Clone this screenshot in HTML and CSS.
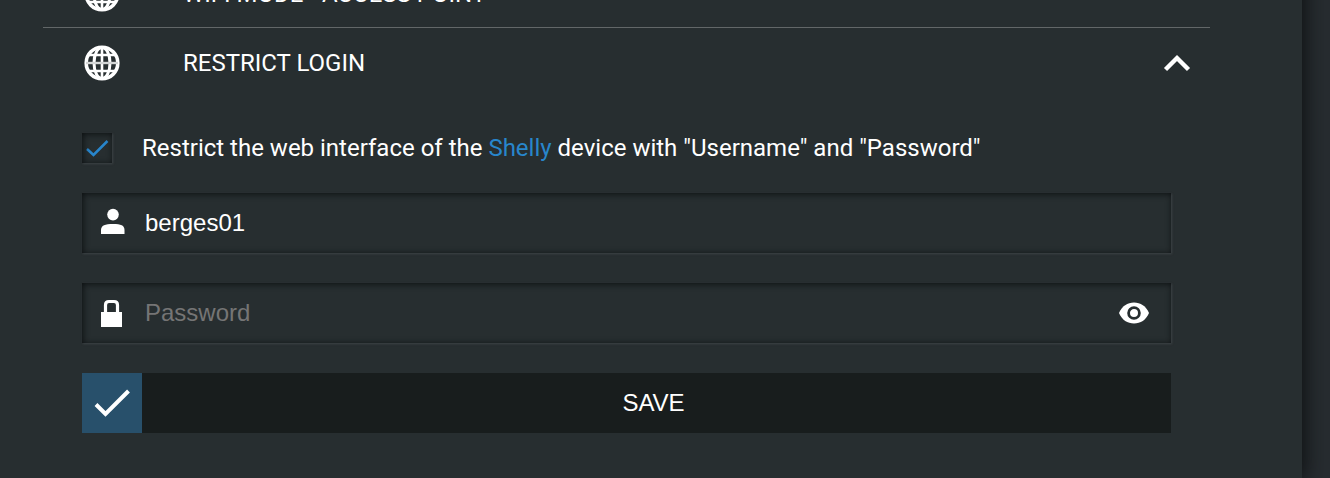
FILE: index.html
```html
<!DOCTYPE html>
<html lang="en">
<head>
<meta charset="utf-8">
<meta name="viewport" content="width=device-width, initial-scale=1">
<title>Restrict login</title>
<link rel="stylesheet" href="styles.css">
</head>
<body>
<svg class="sprite" aria-hidden="true">
  <symbol id="globe" viewBox="0 0 36 36">
    <g fill="none" stroke="#fff">
      <circle cx="18" cy="18" r="15.8" stroke-width="3.6"/>
      <ellipse cx="18" cy="18" rx="8" ry="15.5" stroke-width="3"/>
      <path d="M18 2V34" stroke-width="2.6"/>
      <path d="M2 18H34" stroke-width="2.4" stroke="#d4d6d6"/>
      <path d="M5 10H31M5 26H31" stroke-width="2.6"/>
    </g>
  </symbol>
</svg>
<main class="panel">
  <button class="row" type="button">
    <svg class="globe" aria-hidden="true"><use href="#globe"/></svg>
    <span class="title">WIFI MODE - ACCESS POINT</span>
  </button>
  <section>
    <button class="row row-open" type="button" aria-expanded="true">
      <svg class="globe" aria-hidden="true"><use href="#globe"/></svg>
      <span class="title">RESTRICT LOGIN</span>
      <svg class="chevron" viewBox="0 0 28 18" aria-hidden="true"><path d="M2.500 15.500 14 4 25.500 15.500" fill="none" stroke="#fff" stroke-width="4.400"/></svg>
    </button>
    <form class="form">
      <div class="option">
        <input class="check" id="restrict" type="checkbox" checked>
        <label for="restrict">Restrict the web interface of the <a class="link" href="#">Shelly</a> device with "Username" and "Password"</label>
      </div>
      <div class="field">
        <svg class="icon" viewBox="0 0 26 30" aria-hidden="true"><circle cx="13" cy="6.6" r="5.8" fill="#fff"/><path d="M1 26V22C1 17.500 5 16 13 16S24.500 17.500 24.500 22V26Z" fill="#fff"/></svg>
        <input class="input" type="text" value="berges01" aria-label="Username">
      </div>
      <div class="field">
        <svg class="icon" viewBox="0 0 26 30" aria-hidden="true"><path d="M1 14H22V29H1Z" fill="#fff"/><path d="M5.500 15V7Q5.500 3.500 9 3.500H14Q17.500 3.500 17.500 7V15" fill="none" stroke="#fff" stroke-width="3.200"/></svg>
        <input class="input" type="password" placeholder="Password" aria-label="Password">
        <button class="reveal" type="button" aria-label="Show password">
          <svg class="eye" viewBox="0 0 30 22" aria-hidden="true"><path d="M0 11C3 4 8.500 .5 15 .5S27 4 30 11C27 18 21.500 21.500 15 21.500S3 18 0 11Z" fill="#fff"/><circle cx="15" cy="11" r="5.400" fill="#fff" stroke="#272e30" stroke-width="2.800"/></svg>
        </button>
      </div>
      <button class="save" type="button">
        <span class="save-icon"><svg class="save-check" viewBox="0 0 36 28" aria-hidden="true"><path d="M2 15.500 11.500 25 34.500 2" fill="none" stroke="#fff" stroke-width="4"/></svg></span>
        <span class="save-text">SAVE</span>
      </button>
    </form>
  </section>
</main>
</body>
</html>
```
FILE: styles.css
```css
* { box-sizing: border-box; }

body {
  margin: 0;
  height: 100vh;
  overflow: hidden;
  background: #272c30;
  color: #fff;
  font: 24px/30px Roboto, sans-serif;
}

.sprite { display: none; }

.panel {
  margin: -41px 28px 0 0;
  min-height: calc(100vh + 41px);
  padding: 0 92px 0 43px;
  background: #272e30;
  box-shadow: 0 0 20px 2px #0c0f10;
}

.row {
  display: flex;
  align-items: center;
  width: 100%;
  height: 69px;
  padding: 1px 19px 0 41px;
  border: 0;
  border-bottom: 1px solid #626768;
  background: none;
  color: inherit;
  font: inherit;
  text-align: left;
}

.row-open { border-color: transparent; }

.globe { width: 36px; height: 36px; }
.title { flex: 1; margin-left: 63px; }
.chevron { width: 28px; height: 18px; }

.form {
  display: flex;
  flex-direction: column;
  gap: 30px;
  padding: 36px 39px 45px;
}

.option { display: flex; gap: 30px; }

.check {
  appearance: none;
  width: 30px;
  height: 30px;
  margin: 0;
  background: url("data:image/svg+xml,%3Csvg xmlns='http://www.w3.org/2000/svg' viewBox='0 0 30 30'%3E%3Cpath d='M5 16L11.500 22L25.500 8' fill='none' stroke='%232886cc' stroke-width='2.500'/%3E%3C/svg%3E");
}

.check:not(:checked) { background-image: none; }

.check,
.field { box-shadow: inset 1px 1px 6px #0c1011, 1px 1px 2px #3c4345; }

.link { color: #2886cc; text-decoration: none; }

.field {
  display: flex;
  align-items: center;
  height: 60px;
  padding: 0 22px 0 18px;
}

.icon { width: 26px; height: 30px; }

.input {
  flex: 1;
  min-width: 0;
  margin-left: 19px;
  padding: 0;
  border: 0;
  outline: 0;
  background: none;
  color: #fff;
  font: 24px/30px "Liberation Sans", Arial, sans-serif;
}

.input::placeholder { color: #757575; opacity: 1; }

.reveal {
  display: flex;
  padding: 0;
  border: 0;
  background: none;
}

.eye { width: 30px; height: 22px; }

.save {
  display: flex;
  align-items: center;
  height: 60px;
  padding: 0 6px 0 0;
  border: 0;
  background: #181d1d;
  color: #fff;
  font: 24px/30px "Liberation Sans", Arial, sans-serif;
}

.save-icon {
  display: grid;
  place-items: center;
  width: 60px;
  height: 60px;
  background: #28506b;
}

.save-check { width: 36px; height: 28px; }
.save-text { flex: 1; text-align: center; }
```
